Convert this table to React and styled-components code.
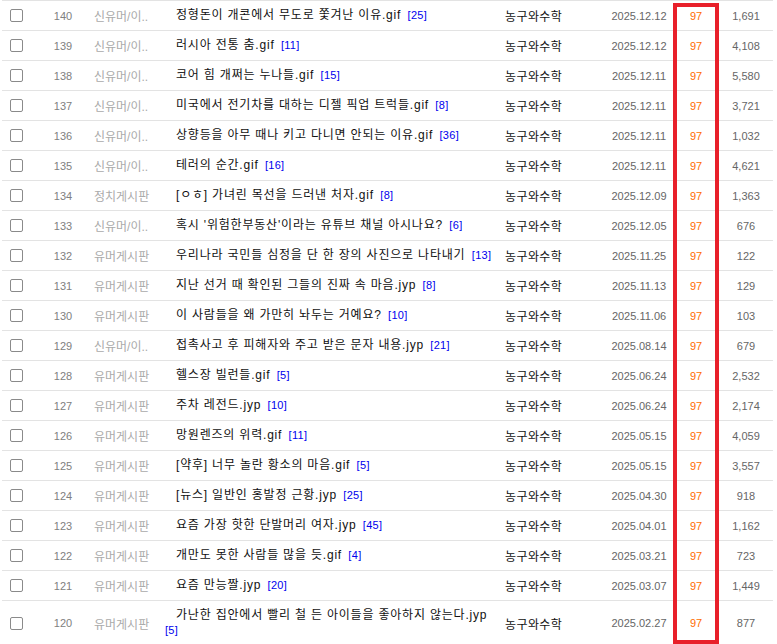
import React from "react";
import styled, { createGlobalStyle } from "styled-components";

const GlobalStyle = createGlobalStyle`
  body {
    margin: 0;
    background: #fff;
    font-family: "Liberation Sans", "Noto Sans CJK KR", sans-serif;
  }
`;

const posts = [
  [140, "신유머/이..", "정형돈이 개콘에서 무도로 쫓겨난 이유.gif", 25, "2025.12.12", "1,691"],
  [139, "신유머/이..", "러시아 전통 춤.gif", 11, "2025.12.12", "4,108"],
  [138, "신유머/이..", "코어 힘 개쩌는 누나들.gif", 15, "2025.12.11", "5,580"],
  [137, "신유머/이..", "미국에서 전기차를 대하는 디젤 픽업 트럭들.gif", 8, "2025.12.11", "3,721"],
  [136, "신유머/이..", "상향등을 아무 때나 키고 다니면 안되는 이유.gif", 36, "2025.12.11", "1,032"],
  [135, "신유머/이..", "테러의 순간.gif", 16, "2025.12.11", "4,621"],
  [134, "정치게시판", "[ㅇㅎ] 가녀린 목선을 드러낸 처자.gif", 8, "2025.12.09", "1,363"],
  [133, "신유머/이..", "혹시 '위험한부동산'이라는 유튜브 채널 아시나요?", 6, "2025.12.05", "676"],
  [132, "유머게시판", "우리나라 국민들 심정을 단 한 장의 사진으로 나타내기", 13, "2025.11.25", "122"],
  [131, "유머게시판", "지난 선거 때 확인된 그들의 진짜 속 마음.jyp", 8, "2025.11.13", "129"],
  [130, "유머게시판", "이 사람들을 왜 가만히 놔두는 거예요?", 10, "2025.11.06", "103"],
  [129, "신유머/이..", "접촉사고 후 피해자와 주고 받은 문자 내용.jyp", 21, "2025.08.14", "679"],
  [128, "유머게시판", "헬스장 빌런들.gif", 5, "2025.06.24", "2,532"],
  [127, "유머게시판", "주차 레전드.jyp", 10, "2025.06.24", "2,174"],
  [126, "유머게시판", "망원렌즈의 위력.gif", 11, "2025.05.15", "4,059"],
  [125, "유머게시판", "[약후] 너무 놀란 황소의 마음.gif", 5, "2025.05.15", "3,557"],
  [124, "유머게시판", "[뉴스] 일반인 홍발정 근황.jyp", 25, "2025.04.30", "918"],
  [123, "유머게시판", "요즘 가장 핫한 단발머리 여자.jyp", 45, "2025.04.01", "1,162"],
  [122, "유머게시판", "개만도 못한 사람들 많을 듯.gif", 4, "2025.03.21", "723"],
  [121, "유머게시판", "요즘 만능짤.jyp", 20, "2025.03.07", "1,449"],
  [120, "유머게시판", "가난한 집안에서 빨리 철 든 아이들을 좋아하지 않는다.jyp", 5, "2025.02.27", "877"],
];

const Board = styled.div`
  position: relative;
  margin-left: 2px;
  width: 771px;
  border-top: 1px solid #e3e3e3;
`;

const Row = styled.div`
  display: grid;
  grid-template-columns: 31px 60px 72px 337px 103px 68px 46px 54px;
  align-items: center;
  min-height: 29px;
  padding: ${(p) => (p.$tall ? "7px 0" : "0")};
  border-bottom: 1px solid #e3e3e3;
  font-size: 12px;
`;

const CheckBox = styled.span`
  display: block;
  width: 11px;
  height: 11px;
  margin-left: 8px;
  border: 1px solid #8a8a8a;
  border-radius: 2px;
  background: #fff;
`;

const Num = styled.div`
  text-align: center;
  font-size: 11px;
  color: #808080;
`;

const Category = styled.div`
  padding-left: 1px;
  color: #aaaaaa;
  white-space: nowrap;
  overflow: hidden;
`;

const Title = styled.div`
  text-indent: 11px;
  line-height: 15px;
  color: #111;
`;

const TitleText = styled.span`
  white-space: nowrap;
  letter-spacing: 0.8px;
  margin-right: 3px;
`;

const Comments = styled.span`
  font-size: 11px;
  letter-spacing: 0.3px;
  color: #0000ee;
`;

const Author = styled.div`
  padding-left: 3px;
  letter-spacing: 0.4px;
  color: #111;
`;

const Date = styled.div`
  text-align: center;
  font-size: 11px;
  color: #666;
`;

const Recommend = styled.div`
  text-align: center;
  font-size: 11px;
  color: #ff6c00;
`;

const Views = styled.div`
  text-align: center;
  font-size: 11px;
  color: #666;
`;

const Highlight = styled.div`
  position: absolute;
  left: 671px;
  top: 2px;
  width: 46px;
  height: 641px;
  box-sizing: border-box;
  border: 4px solid #e8202a;
  pointer-events: none;
`;

export default function App() {
  return (
    <>
      <GlobalStyle />
      <Board>
        {posts.map(([no, cat, title, cmt, date, views]) => (
          <Row key={no} $tall={title.length > 30}>
            <CheckBox />
            <Num>{no}</Num>
            <Category>{cat}</Category>
            <Title>
              <TitleText>{title}</TitleText> <Comments>[{cmt}]</Comments>
            </Title>
            <Author>농구와수학</Author>
            <Date>{date}</Date>
            <Recommend>97</Recommend>
            <Views>{views}</Views>
          </Row>
        ))}
        <Highlight />
      </Board>
    </>
  );
}
